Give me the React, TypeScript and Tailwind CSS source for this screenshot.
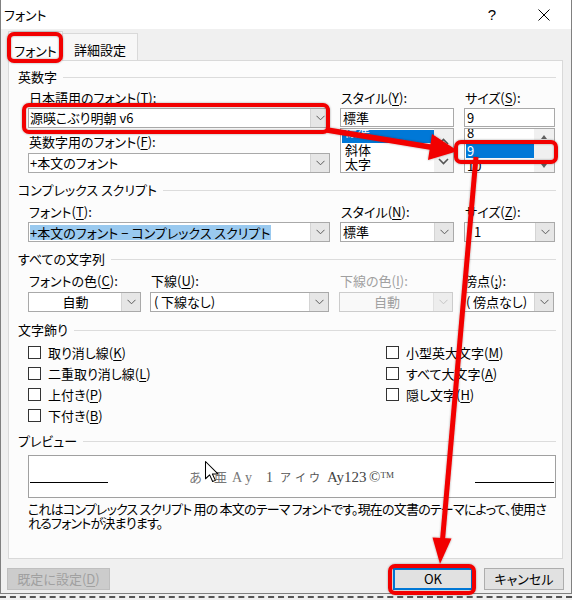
import React from "react";

const RED = "#f20000";

function K({ k }: { k: string }) {
  return <span className="underline decoration-1 underline-offset-[2px]">{k}</span>;
}

function Lbl({
  children,
  disabled = false,
  className = "",
}: {
  children: React.ReactNode;
  disabled?: boolean;
  className?: string;
}) {
  return (
    <div
      className={`h-[16px] leading-[16px] whitespace-nowrap pl-[1px] ${
        disabled ? "text-[#a0a0a0]" : "text-black"
      } ${className}`}
    >
      {children}
    </div>
  );
}

function Chevron({ color = "#5a5a5a" }: { color?: string }) {
  return (
    <svg width="9" height="6" viewBox="0 0 9 6">
      <path d="M0.5 0.8 L4.5 4.8 L8.5 0.8" fill="none" stroke={color} strokeWidth="1" />
    </svg>
  );
}

function Combo({
  children,
  className = "",
  disabled = false,
  center = false,
}: {
  children?: React.ReactNode;
  className?: string;
  disabled?: boolean;
  center?: boolean;
}) {
  return (
    <div
      className={`h-[20px] flex border ${
        disabled ? "border-[#cccccc] bg-[#f9f9f9] text-[#a0a0a0]" : "border-[#a9a9a9] bg-white"
      } ${className}`}
    >
      <div
        className={`flex-1 min-w-0 flex items-center overflow-hidden whitespace-nowrap leading-[16px] pl-[1px] ${
          center ? "justify-center" : ""
        }`}
      >
        {children}
      </div>
      <div
        className={`w-[19px] shrink-0 flex items-center justify-center border-l ${
          disabled ? "bg-[#ededed] border-[#e0e0e0]" : "bg-[#e6e6e6] border-[#d4d4d4]"
        }`}
      >
        <Chevron color={disabled ? "#c4c4c4" : "#5a5a5a"} />
      </div>
    </div>
  );
}

function Section({ title, className = "" }: { title: string; className?: string }) {
  return (
    <div className={`h-[16px] flex items-center gap-[6px] ${className}`}>
      <span className="leading-[16px] whitespace-nowrap">{title}</span>
      <div className="flex-1 h-px bg-[#dcdcdc]" />
    </div>
  );
}

function Check({ children }: { children: React.ReactNode }) {
  return (
    <div className="h-[21px] flex items-center gap-[7px]">
      <div className="w-[13px] h-[13px] border border-[#333333] bg-white shrink-0" />
      <span className="leading-[16px] whitespace-nowrap">{children}</span>
    </div>
  );
}

function TextBox({ children }: { children: React.ReactNode }) {
  return (
    <div className="mt-[2px] h-[19px] border border-[#a9a9a9] bg-white flex items-center pl-[2px] leading-[16px]">
      {children}
    </div>
  );
}

export default function App() {
  return (
    <div className="relative w-[572px] h-[600px] overflow-hidden bg-[#f0f0f0] text-[13px] text-black [font-family:'Noto_Sans_CJK_JP','Noto_Sans',sans-serif] [font-feature-settings:'palt']">
      <div className="h-[594px] flex flex-col bg-[#f0f0f0] border-x border-b border-[#808080]">
        {/* title bar */}
        <div className="h-[29px] shrink-0 bg-white flex items-center pl-[3px] pr-[21px]">
          <span className="leading-[16px]">フォント</span>
          <span className="ml-auto w-[14px] text-center leading-[16px] text-[15px] [font-family:'Liberation_Sans',sans-serif]">
            ?
          </span>
          <svg className="ml-[39px]" width="12" height="12" viewBox="0 0 12 12">
            <path d="M0.5 0.5L11.5 11.5M11.5 0.5L0.5 11.5" stroke="#000" strokeWidth="1" />
          </svg>
        </div>

        {/* tabs */}
        <div className="h-[31px] shrink-0 flex items-end pl-[7px] relative z-10">
          <div className="w-[55px] h-[30px] -mb-px border border-b-0 border-[#d9d9d9] bg-[#fcfcfc] flex items-center justify-center pt-[8px] leading-[16px]">
            フォント
          </div>
          <div className="w-[75px] h-[27px] border border-b-0 border-l-0 border-[#d9d9d9] bg-[#f7f7f7] flex items-center justify-center pt-[6px] leading-[16px]">
            詳細設定
          </div>
        </div>

        {/* panel */}
        <div className="ml-[7px] w-[555px] h-[499px] shrink-0 border border-[#d9d9d9] bg-[#fcfcfc] pl-[9px] pr-[6px] pt-[8px]">
          <Section title="英数字" />
          <div className="pl-[10px] grid grid-cols-[302px_114px_91px] gap-x-[10px] mt-[5px]">
            <div>
              <Lbl>
                日本語用のフォント(<K k="T" />):
              </Lbl>
              <Combo className="mt-[2px]">源暎こぶり明朝 v6</Combo>
              <Lbl className="mt-[6px]">
                英数字用のフォント(<K k="F" />):
              </Lbl>
              <Combo className="mt-[3px]">+本文のフォント</Combo>
            </div>
            <div>
              <Lbl>
                スタイル(<K k="Y" />):
              </Lbl>
              <TextBox>標準</TextBox>
              <div className="mt-[1px] h-[45px] border border-[#a9a9a9] bg-white flex">
                <div className="flex-1 overflow-hidden pl-[1px]">
                  <div className="h-[13px] mt-[1px] overflow-hidden bg-[#0078d7] text-white">
                    <div className="leading-[14px] -mt-[6px] pl-[2px]">標準</div>
                  </div>
                  <div className="leading-[14px] pl-[3px]">斜体</div>
                  <div className="leading-[14px] pl-[3px]">太字</div>
                </div>
                <div className="w-[19px] bg-[#f0f0f0] flex flex-col items-center justify-between pt-[9px] pb-[7px]">
                  <svg width="11" height="7" viewBox="0 0 11 7">
                    <path d="M1 6 L5.5 1.5 L10 6" fill="none" stroke="#555" strokeWidth="1.6" />
                  </svg>
                  <svg width="11" height="7" viewBox="0 0 11 7">
                    <path d="M1 1 L5.5 5.5 L10 1" fill="none" stroke="#555" strokeWidth="1.6" />
                  </svg>
                </div>
              </div>
            </div>
            <div>
              <Lbl>
                サイズ(<K k="S" />):
              </Lbl>
              <TextBox>9</TextBox>
              <div className="mt-[1px] h-[45px] border border-[#a9a9a9] bg-white flex">
                <div className="flex-1 overflow-hidden pl-[1px]">
                  <div className="h-[14px] overflow-hidden">
                    <div className="leading-[14px] -mt-[3px] pl-[1px]">8</div>
                  </div>
                  <div className="h-[15px] bg-[#0078d7] text-white leading-[15px] pl-[1px]">9</div>
                  <div className="leading-[15px] pl-[1px]">10</div>
                </div>
                <div className="w-[20px] bg-[#f0f0f0] flex flex-col items-center justify-between pt-[6px] pb-[4px]">
                  <svg width="6" height="4" viewBox="0 0 6 4">
                    <path d="M0 4 L3 0 L6 4 Z" fill="#606060" />
                  </svg>
                  <svg width="6" height="4" viewBox="0 0 6 4">
                    <path d="M0 0 L3 4 L6 0 Z" fill="#606060" />
                  </svg>
                </div>
              </div>
            </div>
          </div>

          <Section title="コンプレックス スクリプト" className="mt-[9px]" />
          <div className="pl-[10px] grid grid-cols-[302px_114px_91px] gap-x-[10px] mt-[6px]">
            <div>
              <Lbl>
                フォント(<K k="T" />):
              </Lbl>
              <Combo className="mt-[2px]">
                <span className="bg-[#99c9ef] leading-[15px] pr-[1px]">+本文のフォント − コンプレックス スクリプト</span>
              </Combo>
            </div>
            <div>
              <Lbl>
                スタイル(<K k="N" />):
              </Lbl>
              <Combo className="mt-[2px]">
                <span className="pl-[1px]">標準</span>
              </Combo>
            </div>
            <div>
              <Lbl>
                サイズ(<K k="Z" />):
              </Lbl>
              <Combo className="mt-[2px]">
                <span className="pl-[8px]">1</span>
              </Combo>
            </div>
          </div>

          <Section title="すべての文字列" className="mt-[9px]" />
          <div className="pl-[10px] grid grid-cols-[113px_178px_114px_91px] gap-x-[10px] mt-[6px]">
            <div>
              <Lbl>
                フォントの色(<K k="C" />):
              </Lbl>
              <Combo className="mt-[3px]" center>
                自動
              </Combo>
            </div>
            <div className="-ml-[1px] w-[179px]">
              <Lbl>
                下線(<K k="U" />):
              </Lbl>
              <Combo className="mt-[3px]">
                <span className="pl-[2px]">(&thinsp;下線なし)</span>
              </Combo>
            </div>
            <div>
              <Lbl disabled>
                下線の色(<K k="I" />):
              </Lbl>
              <Combo className="mt-[3px]" disabled center>
                自動
              </Combo>
            </div>
            <div>
              <Lbl>
                傍点(<K k=";" />):
              </Lbl>
              <Combo className="mt-[3px]">
                <span className="pl-[1px]">(&thinsp;傍点なし)</span>
              </Combo>
            </div>
          </div>

          <Section title="文字飾り" className="mt-[10px]" />
          <div className="pl-[10px] grid grid-cols-[358px_1fr] mt-[4px]">
            <div>
              <Check>
                取り消し線(<K k="K" />)
              </Check>
              <Check>
                二重取り消し線(<K k="L" />)
              </Check>
              <Check>
                上付き(<K k="P" />)
              </Check>
              <Check>
                下付き(<K k="B" />)
              </Check>
            </div>
            <div>
              <Check>
                小型英大文字(<K k="M" />)
              </Check>
              <Check>
                すべて大文字(<K k="A" />)
              </Check>
              <Check>
                隠し文字(<K k="H" />)
              </Check>
            </div>
          </div>

          <Section title="プレビュー" className="mt-[7px]" />
          <div className="pl-[10px] mt-[6px]">
            <div className="h-[43px] border border-[#a0a0a0] bg-white flex items-start">
              <div className="w-[78px] h-px bg-black mt-[26px] ml-[1px] shrink-0" />
              <div className="ml-[81px] mt-[11px] flex items-baseline whitespace-nowrap text-[14px] leading-[20px] text-[#555] [font-family:'Liberation_Serif','Noto_Sans_CJK_JP',serif] [font-feature-settings:normal]">
                <span className="w-[25px] text-[#777] text-[13px]">あ</span>
                <span className="w-[18px] text-[#777] text-[13px]">亜</span>
                <span className="w-[13px] text-[#777]">A</span>
                <span className="w-[21px] text-[#777]">y</span>
                <span className="w-[14px]">1</span>
                <span className="w-[15px] text-[11px]">ア</span>
                <span className="w-[14px] text-[11px]">イ</span>
                <span className="w-[18px] text-[11px]">ウ</span>
                <span className="w-[42px] text-[15px] text-[#444]">Ay123</span>
                <span className="text-[15px] text-[#444]">
                  ©<sup className="text-[9px]">TM</sup>
                </span>
              </div>
              <div className="ml-auto w-[79px] h-px bg-black mt-[26px] mr-[1px] shrink-0" />
            </div>
            <div className="mt-[4px] leading-[14px] whitespace-nowrap tracking-[-0.8px]">
              これはコンプレックス スクリプト 用の 本文のテーマ フォントです。現在の文書のテーマによって、使用さ
              <br />
              れるフォントが決まります。
            </div>
          </div>
        </div>

        {/* buttons */}
        <div className="mt-[9px] h-[22px] shrink-0 flex pl-[6px] pr-[7px]">
          <div className="w-[103px] h-full border border-[#bfbfbf] bg-[#cccccc] text-[#a0a0a0] flex items-center justify-center leading-[16px]">
            既定に設定(<K k="D" />)
          </div>
          <div className="ml-auto w-[80px] h-full border border-[#0078d7] shadow-[inset_0_0_0_1px_#0078d7] bg-[#e1e1e1] flex items-center justify-center leading-[16px]">
            OK
          </div>
          <div className="ml-[11px] w-[80px] h-full border border-[#adadad] bg-[#e1e1e1] flex items-center justify-center leading-[16px]">
            キャンセル
          </div>
        </div>
      </div>
      <div className="h-[6px] pt-[2px] bg-[#f0f0f0]">
        <div className="border-t-2 border-dashed border-[#555]" />
      </div>

      {/* annotation overlay */}
      <svg className="absolute inset-0 z-20 pointer-events-none" width="572" height="600" viewBox="0 0 572 600">
        <defs>
          <filter id="sh" x="-5%" y="-5%" width="110%" height="110%">
            <feDropShadow dx="0" dy="0" stdDeviation="1" floodColor="#000" floodOpacity="0.35" />
          </filter>
        </defs>
        <g filter="url(#sh)">
          <g fill="none" stroke={RED} strokeWidth="4">
            <rect x="9" y="34" width="52" height="27" rx="5" />
            <rect x="24" y="105" width="304" height="27" rx="5" />
            <rect x="456" y="142" width="100" height="20" rx="5" />
            <rect x="390" y="566" width="84" height="27" rx="5" />
          </g>
          <line x1="327" y1="130" x2="433" y2="147.5" stroke={RED} strokeWidth="5.5" />
          <polygon points="458,151 432,134 428,160" fill={RED} />
          <line x1="476" y1="157" x2="442.5" y2="540" stroke={RED} strokeWidth="5" />
          <polygon points="440,564 451.5,538.5 432.5,537.5" fill={RED} />
        </g>
        <g transform="translate(205.5 461.5) scale(1.15)">
          <path d="M0 0 L0 15 L3.6 11.6 L6.2 17.4 L8.6 16.4 L6 10.8 L10.8 10.8 Z" fill="#fff" stroke="#000" strokeWidth="0.9" strokeLinejoin="round" />
        </g>
      </svg>
    </div>
  );
}
